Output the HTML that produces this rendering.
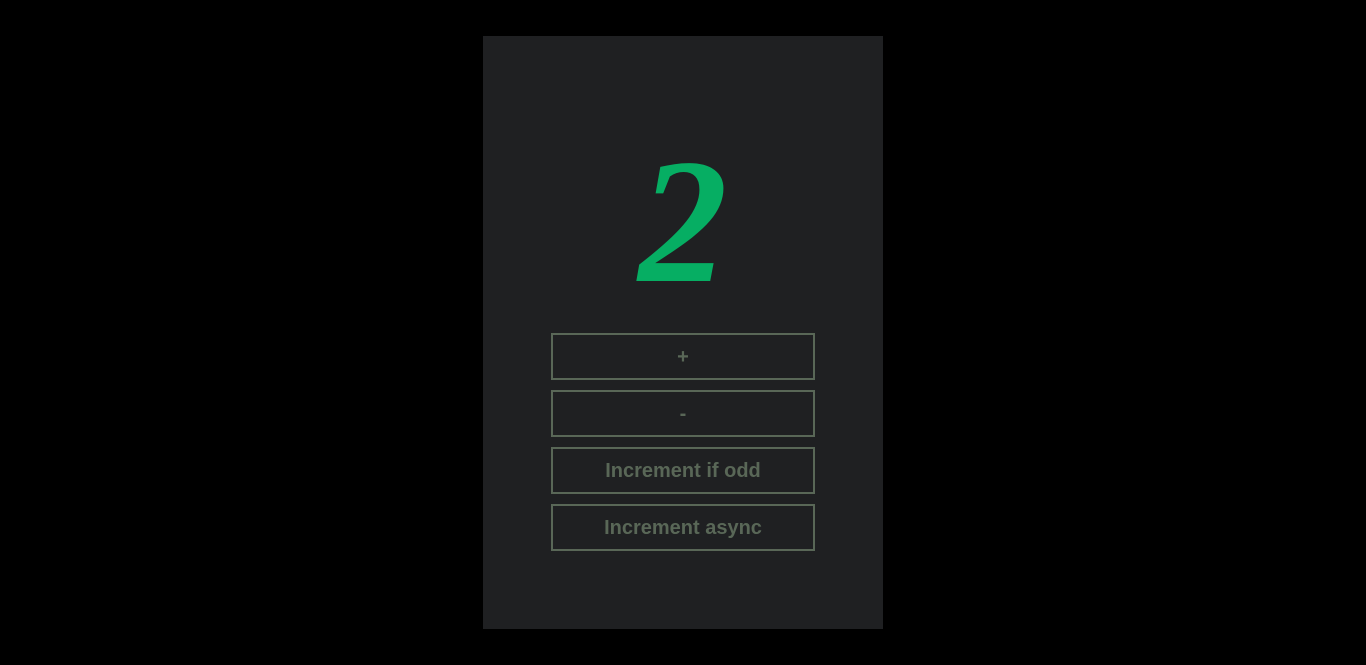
<!DOCTYPE html>
<html><head><meta charset="utf-8"><style>
html,body{margin:0;padding:0;background:#000;width:1366px;height:665px;overflow:hidden}
.panel{position:absolute;left:483px;top:36px;width:400px;height:593px;background:#1f2022}
.num{position:absolute;left:0;width:400px;top:95px;text-align:center;font-family:"Liberation Serif",serif;font-weight:bold;font-style:italic;font-size:178px;line-height:180px;color:#06ae63}
.btn{position:absolute;left:68px;width:260px;height:43px;border:2px solid #596757;color:#596757;font-family:"Liberation Sans",sans-serif;font-weight:bold;font-size:20px;line-height:44px;text-align:center;box-sizing:content-box}
</style></head><body>
<div class="panel">
<div class="num">2</div>
<div class="btn" style="top:297px">+</div>
<div class="btn" style="top:354px">-</div>
<div class="btn" style="top:411px">Increment if odd</div>
<div class="btn" style="top:468px">Increment async</div>
</div>
</body></html>
